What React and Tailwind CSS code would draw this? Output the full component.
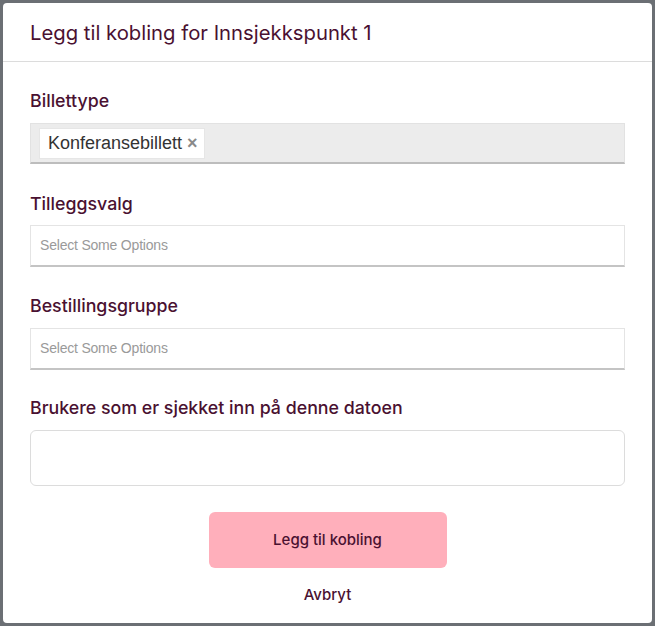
export default function App() {
  const label = "text-[17.8px] leading-[24px] font-medium text-[#4a1131]";
  return (
    <div className="w-[655px] h-[626px] bg-[#6b6f74] p-[3px]" style={{ fontFamily: "Inter, 'Liberation Sans', sans-serif" }}>
      <div className="w-full h-full bg-white rounded-[4px] flex flex-col">
        <div className="h-[59px] flex items-center px-[27px] border-b border-[#dcdcdc]">
          <h1 className="text-[20.3px] font-normal text-[#4a1131] pt-[2px]">Legg til kobling for Innsjekkspunkt 1</h1>
        </div>
        <div className="px-[27px] pt-[27px] flex flex-col">
          <div className={label}>Billettype</div>
          <div className="mt-[10px] h-[41px] bg-[#ececec] border border-[#e2e2e2] border-b-[2px] border-b-[#bdbdbd] flex items-center px-[8px]">
            <div className="h-[31px] bg-white border border-[#e6e6e6] flex items-center pl-[8px] pr-[6px] gap-[5px]" style={{ fontFamily: "'Liberation Sans', Arial, sans-serif" }}>
              <span className="text-[18px] text-[#333]">Konferansebillett</span>
              <span className="text-[18px] font-bold text-[#8a8a8a] leading-none">×</span>
            </div>
          </div>

          <div className={label + " mt-[28px]"}>Tilleggsvalg</div>
          <div className="mt-[9px] h-[42px] bg-white border border-[#e4e4e4] border-b-[2px] border-b-[#c4c4c4] flex items-center px-[9px]">
            <span className="text-[14px] text-[#9a9a9a] tracking-[-0.2px]" style={{ fontFamily: "'Liberation Sans', Arial, sans-serif" }}>Select Some Options</span>
          </div>

          <div className={label + " mt-[27px]"}>Bestillingsgruppe</div>
          <div className="mt-[10px] h-[42px] bg-white border border-[#e4e4e4] border-b-[2px] border-b-[#c4c4c4] flex items-center px-[9px]">
            <span className="text-[14px] text-[#9a9a9a] tracking-[-0.2px]" style={{ fontFamily: "'Liberation Sans', Arial, sans-serif" }}>Select Some Options</span>
          </div>

          <div className={label + " mt-[26px]"}>Brukere som er sjekket inn på denne datoen</div>
          <div className="mt-[10px] h-[56px] bg-white border border-[#dcdcdc] rounded-[6px]"></div>

          <div className="flex flex-col items-center">
            <button className="mt-[26px] w-[238px] h-[56px] bg-[#ffafbb] rounded-[6px] text-[15px] font-medium text-[#4a1131]">Legg til kobling</button>
            <button className="mt-[17px] text-[15px] font-medium text-[#4a1131] leading-[20px]">Avbryt</button>
          </div>
        </div>
      </div>
    </div>
  );
}
